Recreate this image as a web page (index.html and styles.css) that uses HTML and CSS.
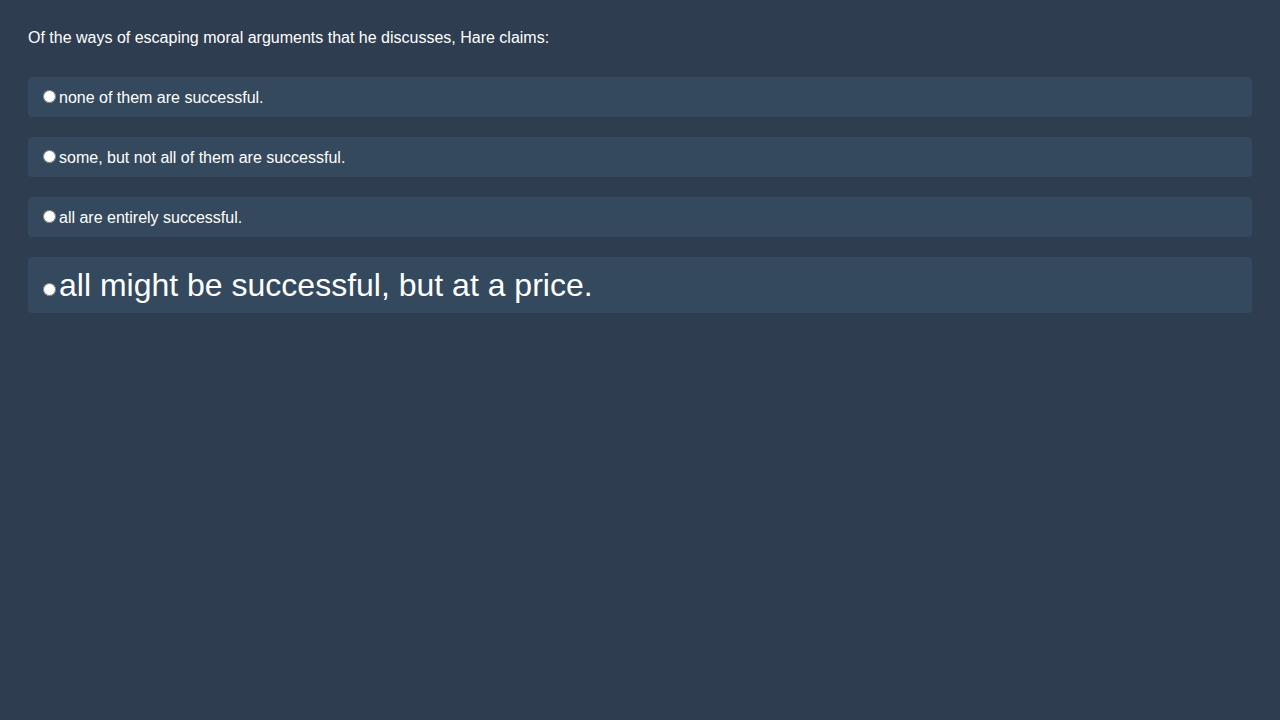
FILE: index.html
```html
<!DOCTYPE html>
<html>
<head>
<meta charset="utf-8">
<link rel="stylesheet" href="styles.css">
</head>
<body>
<div class="quiz">
  <p class="question">Of the ways of escaping moral arguments that he discusses, Hare claims:</p>
  <div class="options">
    <label class="option"><input type="radio" name="q">none of them are successful.</label>
    <label class="option"><input type="radio" name="q">some, but not all of them are successful.</label>
    <label class="option"><input type="radio" name="q">all are entirely successful.</label>
    <label class="option option-big"><input type="radio" name="q">all might be successful, but at a price.</label>
  </div>
</div>
</body>
</html>
```
FILE: styles.css
```css
html, body {
  margin: 0;
  background: #2e3d50;
}
body {
  padding: 28px 28px;
  font-family: "Liberation Sans", Arial, sans-serif;
  color: #ffffff;
  font-size: 16px;
}
.question {
  margin: 0 0 29px 0;
  line-height: 20px;
}
.options {
  display: flex;
  flex-direction: column;
  gap: 20px;
}
.option {
  display: block;
  background: #34495e;
  border-radius: 4px;
  padding: 10px;
  line-height: 19px;
}
.option input {
  margin: 3px 3px 0 5px;
}
.option-big {
  font-size: 32px;
  line-height: 36px;
}
```
